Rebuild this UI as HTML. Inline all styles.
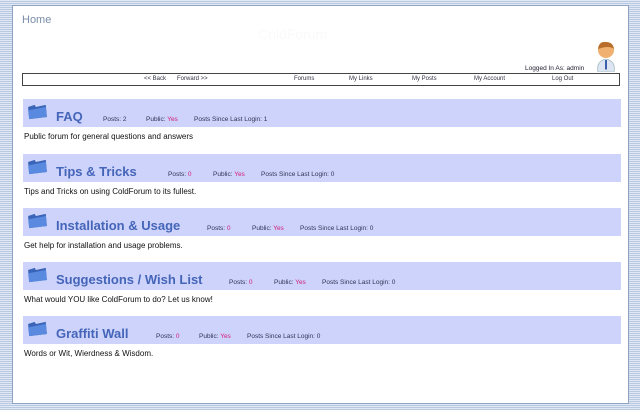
<!DOCTYPE html>
<html><head><style>
body{margin:0;width:640px;height:410px;overflow:hidden;font-family:"Liberation Sans",sans-serif;
background:repeating-linear-gradient(#dfe8f4 0 1px,#b9c9e0 1px 2px);}
#p{position:absolute;left:12px;top:5px;width:615px;height:397px;background:#fff;border:1px solid #8fa4c4;}
.a{position:absolute;}
.bar{position:absolute;left:10px;width:598px;height:28px;background:#cdd3fb;}
.t{position:absolute;left:33px;top:10px;font-size:13px;font-weight:bold;color:#4565b8;white-space:nowrap}
.s{position:absolute;top:17px;font-size:6.5px;color:#335;white-space:nowrap}
.s b{font-weight:normal;color:#d0207a}
.d{position:absolute;left:11px;font-size:8px;color:#111}
.f{position:absolute;left:4px;top:4px;width:21px;height:18px}
</style></head><body>
<div id="p">
<div class="a" style="left:9px;top:8px;font-size:11px;color:#7a8ca8">Home</div>
<div class="a" style="left:245px;top:20px;font-size:14px;color:#fafafa">ColdForum</div>
<svg class="a" style="left:581px;top:33px" width="24" height="33" viewBox="0 0 24 33"><path d="M4 33 Q2 22 12 20 Q22 22 20 33Z" fill="#dde4f2" stroke="#8aa" stroke-width=".6"/><path d="M11 21 L13 21 L13 30 L12 31 L11 30Z" fill="#3b5fa8"/><circle cx="12" cy="11" r="8" fill="#f0b070"/><path d="M4 10 Q5 2 12 3 Q19 3 20 10 Q15 6 4 10Z" fill="#b86e2a"/></svg>
<div class="a" style="left:512px;top:59px;font-size:6.5px;color:#223">Logged In As: admin</div>
<div class="a" style="left:9px;top:67px;width:596px;height:11px;border:1px solid #444;font-size:6px;color:#334">
<span class="a" style="left:121px;top:2px">&lt;&lt; Back</span><span class="a" style="left:154px;top:2px">Forward &gt;&gt;</span>
<span class="a" style="left:271px;top:2px">Forums</span><span class="a" style="left:326px;top:2px">My Links</span>
<span class="a" style="left:389px;top:2px">My Posts</span><span class="a" style="left:451px;top:2px">My Account</span><span class="a" style="left:529px;top:2px">Log Out</span></div>

<div class="bar" style="top:93px"><svg class="f" viewBox="0 0 19 15"><path d="M1 3 L7 1 L8 3 L17 1 L18 12 L2 14Z" fill="#3a64b8"/><path d="M1 6 L17 3 L18 12 L2 14Z" fill="#5a8ae0"/></svg><span class="t">FAQ</span><span class="s" style="left:80px">Posts: 2</span><span class="s" style="left:123px">Public: <b>Yes</b></span><span class="s" style="left:171px">Posts Since Last Login: 1</span></div>
<div class="d" style="top:126px">Public forum for general questions and answers</div>

<div class="bar" style="top:148px"><svg class="f" viewBox="0 0 19 15"><path d="M1 3 L7 1 L8 3 L17 1 L18 12 L2 14Z" fill="#3a64b8"/><path d="M1 6 L17 3 L18 12 L2 14Z" fill="#5a8ae0"/></svg><span class="t">Tips &amp; Tricks</span><span class="s" style="left:145px">Posts: <b>0</b></span><span class="s" style="left:190px">Public: <b>Yes</b></span><span class="s" style="left:238px">Posts Since Last Login: 0</span></div>
<div class="d" style="top:181px">Tips and Tricks on using ColdForum to its fullest.</div>

<div class="bar" style="top:202px"><svg class="f" viewBox="0 0 19 15"><path d="M1 3 L7 1 L8 3 L17 1 L18 12 L2 14Z" fill="#3a64b8"/><path d="M1 6 L17 3 L18 12 L2 14Z" fill="#5a8ae0"/></svg><span class="t">Installation &amp; Usage</span><span class="s" style="left:184px">Posts: <b>0</b></span><span class="s" style="left:229px">Public: <b>Yes</b></span><span class="s" style="left:277px">Posts Since Last Login: 0</span></div>
<div class="d" style="top:235px">Get help for installation and usage problems.</div>

<div class="bar" style="top:256px"><svg class="f" viewBox="0 0 19 15"><path d="M1 3 L7 1 L8 3 L17 1 L18 12 L2 14Z" fill="#3a64b8"/><path d="M1 6 L17 3 L18 12 L2 14Z" fill="#5a8ae0"/></svg><span class="t">Suggestions / Wish List</span><span class="s" style="left:206px">Posts: <b>0</b></span><span class="s" style="left:251px">Public: <b>Yes</b></span><span class="s" style="left:299px">Posts Since Last Login: 0</span></div>
<div class="d" style="top:289px">What would YOU like ColdForum to do? Let us know!</div>

<div class="bar" style="top:310px"><svg class="f" viewBox="0 0 19 15"><path d="M1 3 L7 1 L8 3 L17 1 L18 12 L2 14Z" fill="#3a64b8"/><path d="M1 6 L17 3 L18 12 L2 14Z" fill="#5a8ae0"/></svg><span class="t">Graffiti Wall</span><span class="s" style="left:133px">Posts: <b>0</b></span><span class="s" style="left:176px">Public: <b>Yes</b></span><span class="s" style="left:224px">Posts Since Last Login: 0</span></div>
<div class="d" style="top:343px">Words or Wit, Wierdness &amp; Wisdom.</div>
</div>
</body></html>
